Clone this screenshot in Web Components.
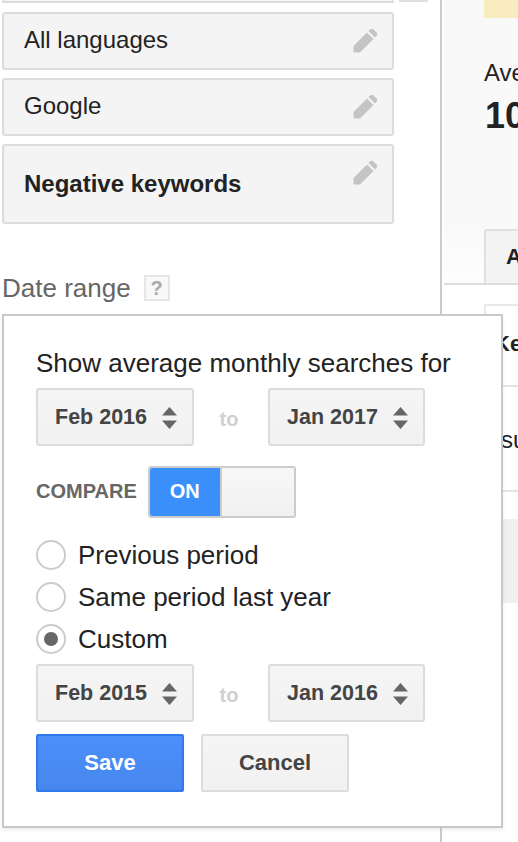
<!DOCTYPE html>
<html>
<head>
<meta charset="utf-8">
<title>Date range</title>
<style>
  html, body { margin: 0; padding: 0; height: 842px; overflow: hidden; background: #fff; }
  body { font-family: "Liberation Sans", Arial, sans-serif; color: #222; }
</style>
</head>
<body>
<keyword-planner>
  <filter-card slot="top" class="cut"></filter-card>
  <filter-card slot="filters">All languages</filter-card>
  <filter-card slot="filters">Google</filter-card>
  <filter-card slot="filters" strong>Negative keywords</filter-card>
  <date-popup slot="popup"></date-popup>
</keyword-planner>

<script>
const PENCIL = `<svg width="25" height="25" viewBox="0 0 25 25"><path fill="#c4c4c4" d="M.5 24.500V18L14 4.500 20.500 11 7 24.500z"/><path fill="#c4c4c4" d="M15.500 3 17 1.500C18 .5 19.500 .5 20.500 1.500L23.500 4.500C24.500 5.500 24.500 7 23.500 8L22 9.500z"/></svg>`;

class FilterCard extends HTMLElement {
  connectedCallback() {
    const shadow = this.attachShadow({ mode: "open" });
    const strong = this.hasAttribute("strong");
    shadow.innerHTML = `
      <style>
        :host {
          display: flex;
          box-sizing: border-box;
          width: 392px;
          height: ${strong ? 80 : 58}px;
          padding: 0 14px 0 20px;
          align-items: center;
          justify-content: space-between;
          background: #f4f4f4;
          border: 2px solid #dcdcdc;
          border-radius: 3px;
          font-size: 24px;
          color: #222;
          margin-bottom: 8px;
        }
        :host(.cut) { height: 3px; margin: 0; padding: 0; border-top: 0; }
        .label { font-weight: ${strong ? 700 : 400}; padding-bottom: ${strong ? 0 : 2}px; }
        .icon { height: 25px; align-self: flex-start; margin-top: 14px; }
      </style>
      <span class="label"><slot></slot></span>
      ${this.classList.contains("cut") ? "" : `<span class="icon">${PENCIL}</span>`}
    `;
  }
}

class MonthSelect extends HTMLElement {
  connectedCallback() {
    const shadow = this.attachShadow({ mode: "open" });
    shadow.innerHTML = `
      <style>
        :host {
          display: inline-flex;
          box-sizing: border-box;
          height: 58px;
          align-items: center;
          justify-content: space-between;
          padding: 0 15px 0 17px;
          background: linear-gradient(#f5f5f5, #f1f1f1);
          border: 2px solid #dcdcdc;
          border-radius: 3px;
          font-size: 21.5px;
          font-weight: 700;
          color: #444;
        }
        svg { display: block; margin-top: 1px; }
      </style>
      <slot></slot>
      <svg width="15" height="22" viewBox="0 0 15 22"><path fill="#666" d="M7.500 0 15 8.500H0zM0 13.500H15L7.500 22z"/></svg>
    `;
  }
}

class RangeRow extends HTMLElement {
  connectedCallback() {
    const shadow = this.attachShadow({ mode: "open" });
    shadow.innerHTML = `
      <style>
        :host { display: grid; grid-template-columns: 158px 74px 157px; }
        .to { align-self: center; text-align: center; font-size: 20px; font-weight: 700; color: #d0d0d0; padding: 5px 4px 0 0; }
      </style>
      <month-select>${this.getAttribute("from")}</month-select>
      <span class="to">to</span>
      <month-select>${this.getAttribute("until")}</month-select>
    `;
  }
}

class RadioOption extends HTMLElement {
  connectedCallback() {
    const shadow = this.attachShadow({ mode: "open" });
    shadow.innerHTML = `
      <style>
        :host { display: flex; align-items: center; height: 30px; gap: 12px; font-size: 26px; color: #222; }
        .dot { box-sizing: border-box; width: 30px; height: 30px; border: 2px solid #ccc; border-radius: 50%; background: #fff; display: flex; align-items: center; justify-content: center; }
        :host([checked]) .dot::after { content: ""; width: 14px; height: 14px; border-radius: 50%; background: #666; }
      </style>
      <span class="dot"></span>
      <span><slot></slot></span>
    `;
  }
}

class OnToggle extends HTMLElement {
  connectedCallback() {
    const shadow = this.attachShadow({ mode: "open" });
    shadow.innerHTML = `
      <style>
        :host { display: flex; box-sizing: border-box; width: 148px; height: 52px; border: 2px solid #ccc; border-radius: 3px; background: linear-gradient(#f7f7f7, #f1f1f1); }
        .on { width: 70px; background: #3b8ffb; border-right: 2px solid #ccc; color: #fff; font-size: 20px; font-weight: 700; display: flex; align-items: center; justify-content: center; padding-bottom: 2px; box-sizing: content-box; border-radius: 2px 0 0 2px; }
      </style>
      <span class="on">ON</span>
    `;
  }
}

class DatePopup extends HTMLElement {
  connectedCallback() {
    const shadow = this.attachShadow({ mode: "open" });
    shadow.innerHTML = `
      <style>
        :host {
          display: block;
          box-sizing: border-box;
          width: 501px;
          height: 514px;
          padding: 32px 32px 0 32px;
          background: #fff;
          border: 2px solid #c8c8c8;
          box-shadow: 0 2px 4px rgba(0,0,0,.08);
        }
        h2 { margin: 0 0 10px; font-size: 26px; line-height: 30px; font-weight: 400; color: #222; white-space: nowrap; }
        .compare { display: flex; align-items: center; gap: 11px; margin: 20px 0 22px 0; }
        .compare span { font-size: 20px; font-weight: 700; color: #666; padding-bottom: 2px; }
        .radios { display: grid; gap: 12px; margin-bottom: 10px; }
        .actions { display: flex; gap: 17px; margin-top: 12px; }
        button { box-sizing: border-box; width: 148px; height: 58px; font: 700 22px "Liberation Sans", Arial, sans-serif; border-radius: 2px; padding: 0; }
        .save { background: linear-gradient(#4c8ffb, #4787ed); border: 2px solid #3079ed; color: #fff; }
        .cancel { background: linear-gradient(#f5f5f5, #f1f1f1); border: 2px solid #dcdcdc; color: #444; }
      </style>
      <h2>Show average monthly searches for</h2>
      <range-row from="Feb 2016" until="Jan 2017"></range-row>
      <div class="compare"><span>COMPARE</span><on-toggle></on-toggle></div>
      <div class="radios">
        <radio-option>Previous period</radio-option>
        <radio-option>Same period last year</radio-option>
        <radio-option checked>Custom</radio-option>
      </div>
      <range-row from="Feb 2015" until="Jan 2016"></range-row>
      <div class="actions">
        <button class="save">Save</button>
        <button class="cancel">Cancel</button>
      </div>
    `;
  }
}

class StatsPanel extends HTMLElement {
  connectedCallback() {
    const shadow = this.attachShadow({ mode: "open" });
    shadow.innerHTML = `
      <style>
        :host {
          display: block;
          height: 842px;
          box-sizing: border-box;
          border-left: 2px solid #ccc;
          padding-left: 2px;
          overflow: hidden;
          font-size: 24px;
          color: #222;
        }
        .head { height: 285px; box-sizing: border-box; padding-left: 40px; background: linear-gradient(#f9f9f9 80%, #fdfdfd); border-bottom: 2px solid #ddd; }
        .notice { height: 18px; background: #f9ecbe; }
        .label { margin-top: 41px; line-height: 28px; white-space: nowrap; }
        .big { font-size: 36px; font-weight: 700; line-height: 44px; margin-top: 7px; padding-left: 1px; }
        .tab { box-sizing: border-box; height: 54px; margin-top: 91px; padding-left: 20px; background: #f4f4f4; border: 2px solid #e0e0e0; border-bottom: 0; border-right: 0; border-radius: 3px 0 0 0; font-weight: 700; font-size: 22px; line-height: 52px; }
        .rows { padding-left: 40px; padding-top: 19px; }
        .cell { height: 83px; box-sizing: border-box; padding-left: 17px; border-bottom: 2px solid #e4e4e4; background: #fff; white-space: nowrap; }
        .key { font-weight: 700; font-size: 22px; line-height: 76px; border-top: 2px solid #e8e8e8; border-left: 2px solid #e8e8e8; padding-left: 8px; }
        .su { height: 105px; line-height: 106px; }
        .grey { height: 84px; background: #f0f0f0; margin-top: 27px; border: 0; }
      </style>
      <div class="head">
        <div class="notice"></div>
        <div class="label">Ave</div>
        <div class="big">10</div>
        <div class="tab">A</div>
      </div>
      <div class="rows">
        <div class="cell key">Ke</div>
        <div class="cell su">su</div>
        <div class="cell grey"></div>
      </div>
    `;
  }
}

class KeywordPlanner extends HTMLElement {
  connectedCallback() {
    const shadow = this.attachShadow({ mode: "open" });
    shadow.innerHTML = `
      <style>
        :host { display: grid; grid-template-columns: 440px 78px; position: relative; width: 518px; height: 842px; overflow: hidden; }
        .filters { padding-left: 2px; }
        .top { display: flex; align-items: flex-start; gap: 5px; margin-bottom: 9px; }
        .stub { box-sizing: border-box; width: 29px; height: 2px; border: 2px solid #e0e0e0; border-top: 0; }
        .date { display: flex; align-items: center; gap: 13px; margin-top: 50px; font-size: 26px; line-height: 28px; color: #666; }
        .help { box-sizing: border-box; flex: none; width: 26px; height: 26px; border: 2px solid #e6e6e6; background: #f8f8f8; color: #aaa; font-size: 20px; font-weight: 700; text-align: center; line-height: 22px; }
        .popup { position: absolute; left: 2px; top: 314px; }
      </style>
      <div class="filters">
        <div class="top"><slot name="top"></slot><span class="stub"></span></div>
        <slot name="filters"></slot>
        <div class="date"><span>Date range</span><span class="help">?</span></div>
      </div>
      <stats-panel></stats-panel>
      <div class="popup"><slot name="popup"></slot></div>
    `;
  }
}

customElements.define("filter-card", FilterCard);
customElements.define("month-select", MonthSelect);
customElements.define("range-row", RangeRow);
customElements.define("radio-option", RadioOption);
customElements.define("on-toggle", OnToggle);
customElements.define("date-popup", DatePopup);
customElements.define("stats-panel", StatsPanel);
customElements.define("keyword-planner", KeywordPlanner);
</script>
</body>
</html>
